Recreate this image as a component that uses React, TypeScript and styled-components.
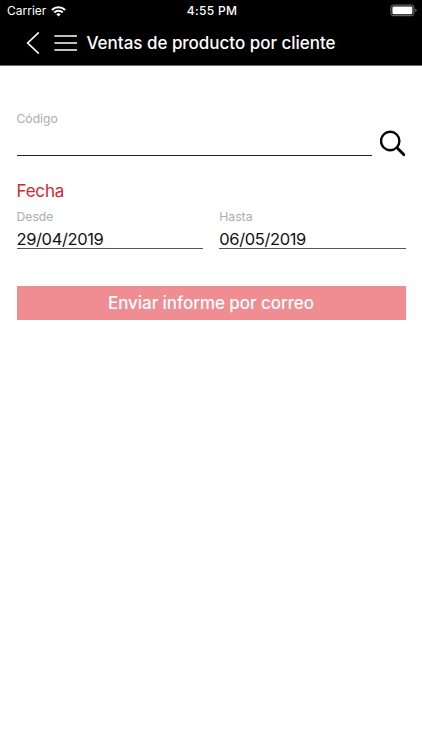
import React from "react";
import styled, { createGlobalStyle } from "styled-components";

const GlobalStyle = createGlobalStyle`
  * { box-sizing: border-box; }
  html, body { margin: 0; background: #fff; }
  body { font-family: Inter, "Liberation Sans", sans-serif; }
`;

const Screen = styled.div`
  width: 422px;
  height: 750px;
  overflow: hidden;
  background: #fff;
`;

const Header = styled.header`
  height: 66px;
  background: #000;
  border-bottom: 1px solid #6b6b6b;
  color: #fff;
`;

const StatusBar = styled.div`
  display: grid;
  grid-template-columns: 1fr auto 1fr;
  align-items: center;
  height: 22px;
  padding: 0 5px 0 7px;
`;

const Carrier = styled.div`
  display: flex;
  align-items: center;
  gap: 5px;
`;

const BatterySlot = styled.div`
  display: flex;
  justify-content: flex-end;
  height: 22px;
  padding-top: 4px;
`;

const NavBar = styled.nav`
  display: flex;
  align-items: center;
  height: 42px;
  padding-left: 26px;
`;

const IconButton = styled.button<{ $gap: number }>`
  display: flex;
  padding: 0;
  margin: 0 ${(p) => p.$gap}px 0 0;
  border: 0;
  background: none;
`;

const Text = styled.span<{ $size: number; $weight?: number; $spacing?: number }>`
  font-size: ${(p) => p.$size}px;
  font-weight: ${(p) => p.$weight ?? 400};
  letter-spacing: ${(p) => p.$spacing ?? 0}px;
  line-height: 22px;
  white-space: nowrap;
`;

const Form = styled.main`
  padding: 42px 16.5px 0;
`;

const CodeRow = styled.div`
  display: flex;
  align-items: flex-end;
  gap: 8px;
  height: 50px;
`;

const Field = styled.label`
  display: flex;
  flex: 1;
  flex-direction: column;
`;

const Label = styled(Text)`
  height: 20px;
  line-height: 21px;
  color: #acacac;
`;

const Input = styled.input<{ $height: number; $line: string }>`
  width: 100%;
  height: ${(p) => p.$height}px;
  padding: 4px 0 0;
  border: 0;
  border-bottom: 1px solid ${(p) => p.$line};
  border-radius: 0;
  outline: 0;
  background: none;
  color: #111;
  font: 400 16.5px/18px Inter, sans-serif;
  letter-spacing: -0.38px;
`;

const CodeField = styled(Field)`
  height: 48px;
  justify-content: space-between;
  align-self: flex-start;
`;

const Section = styled.h2`
  display: flex;
  margin: 22px 0 0;
  color: #d0282f;
`;

const Dates = styled.div`
  display: grid;
  grid-template-columns: 1fr 1fr;
  gap: 16.5px;
  margin-top: 4px;
`;

const Submit = styled.button`
  display: flex;
  align-items: center;
  justify-content: center;
  width: 100%;
  height: 34px;
  margin-top: 37px;
  padding: 0;
  border: 0;
  background: #f08d93;
  color: #fff;
  font-family: inherit;
`;

const WifiIcon = () => (
  <svg width="15" height="11" viewBox="0 0 15 11" fill="none" stroke="#fff" strokeWidth="2.1">
    <path d="M.9 4a9.4 9.4 0 0 1 13.2 0" />
    <path d="M3.3 6.5a6 6 0 0 1 8.4 0" />
    <path d="M7.5 10.5 5.3 8.3a3.1 3.1 0 0 1 4.4 0Z" fill="#fff" stroke="none" />
  </svg>
);

const BatteryIcon = () => (
  <svg width="27" height="13" viewBox="0 0 27 13">
    <rect x=".9" y="1.1" width="23" height="10.6" rx="2.5" fill="none" stroke="#777" />
    <rect x="2.4" y="2.6" width="20" height="7.6" rx="1.2" fill="#fff" />
    <path d="M25.3 4.6q1.2.4 1.2 1.8t-1.2 1.8Z" fill="#777" />
  </svg>
);

const BackIcon = () => (
  <svg width="14" height="22" viewBox="0 0 14 22" fill="none" stroke="#fff" strokeWidth="1.7">
    <path d="M12.8.5 1.7 11l11.1 10.5" />
  </svg>
);

const MenuIcon = () => (
  <svg width="23" height="18" viewBox="0 0 23 18" stroke="#fff" strokeWidth="1.7">
    <path d="M.4 2H23M.4 9H23M.4 16H23" />
  </svg>
);

const SearchIcon = () => (
  <svg width="26" height="28" viewBox="0 0 26 28" fill="none" stroke="#000">
    <circle cx="10.2" cy="11" r="9.2" strokeWidth="2.4" />
    <path d="m17 17.8 6.7 6.8" strokeWidth="2.9" strokeLinecap="round" />
  </svg>
);

export default function App() {
  return (
    <Screen>
      <GlobalStyle />
      <Header>
        <StatusBar>
          <Carrier>
            <Text $size={12}>Carrier</Text>
            <WifiIcon />
          </Carrier>
          <Text $size={12} $weight={500} $spacing={0.3}>4:55 PM</Text>
          <BatterySlot><BatteryIcon /></BatterySlot>
        </StatusBar>
        <NavBar>
          <IconButton $gap={14} aria-label="Atrás"><BackIcon /></IconButton>
          <IconButton $gap={9.5} aria-label="Menú"><MenuIcon /></IconButton>
          <Text $size={17} $weight={500} $spacing={-0.02}>Ventas de producto por cliente</Text>
        </NavBar>
      </Header>
      <Form>
        <CodeRow>
          <CodeField>
            <Label $size={12.2} $spacing={-0.04}>Código</Label>
            <Input $height={24} $line="#222" aria-label="Código" />
          </CodeField>
          <IconButton $gap={0} aria-label="Buscar"><SearchIcon /></IconButton>
        </CodeRow>
        <Section><Text $size={17} $spacing={-0.2}>Fecha</Text></Section>
        <Dates>
          <Field>
            <Label $size={12.2}>Desde</Label>
            <Input $height={23} $line="#555" defaultValue="29/04/2019" />
          </Field>
          <Field>
            <Label $size={12.2}>Hasta</Label>
            <Input $height={23} $line="#555" defaultValue="06/05/2019" />
          </Field>
        </Dates>
        <Submit><Text $size={17} $weight={500} $spacing={-0.06}>Enviar informe por correo</Text></Submit>
      </Form>
    </Screen>
  );
}
